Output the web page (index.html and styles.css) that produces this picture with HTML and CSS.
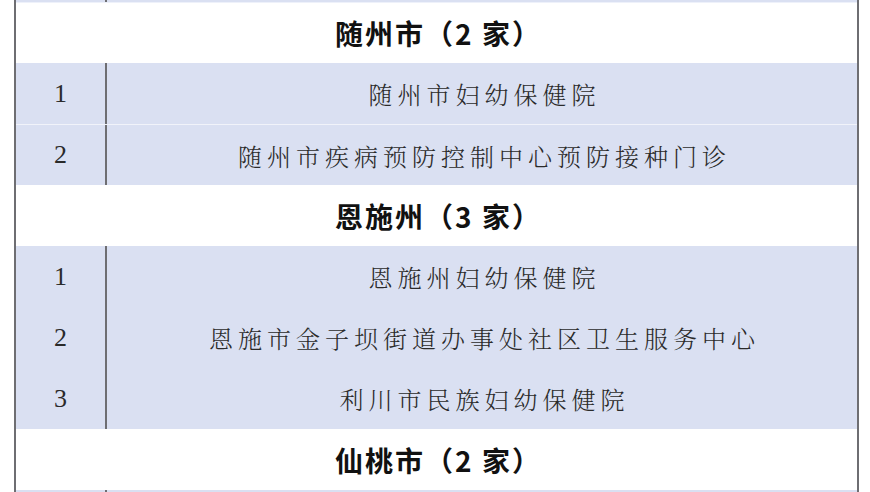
FILE: index.html
```html
<!DOCTYPE html>
<html lang="zh-CN">
<head>
<meta charset="utf-8">
<link rel="stylesheet" href="styles.css">
</head>
<body>
<div class="table">
  <div class="row data stub"><div class="num"></div><div class="name"></div></div>
  <div class="row head h1">随州市（2 家）</div>
  <div class="row data r61 sep"><div class="num">1</div><div class="name">随州市妇幼保健院</div></div>
  <div class="row data r60"><div class="num">2</div><div class="name">随州市疾病预防控制中心预防接种门诊</div></div>
  <div class="row head h2">恩施州（3 家）</div>
  <div class="row data r61"><div class="num">1</div><div class="name">恩施州妇幼保健院</div></div>
  <div class="row data r61"><div class="num">2</div><div class="name">恩施市金子坝街道办事处社区卫生服务中心</div></div>
  <div class="row data r61"><div class="num">3</div><div class="name">利川市民族妇幼保健院</div></div>
  <div class="row head h2">仙桃市（2 家）</div>
  <div class="row data tail"><div class="num"></div><div class="name"></div></div>
</div>
</body>
</html>
```
FILE: styles.css
```css
html, body {
  margin: 0;
  padding: 0;
  background: #ffffff;
}
body {
  width: 870px;
  height: 492px;
  overflow: hidden;
}
.table {
  margin-left: 14px;
  width: 841px;
  border-left: 2px solid #6e6e72;
  border-right: 2px solid #6e6e72;
  display: flex;
  flex-direction: column;
}
.row {
  display: grid;
  grid-template-columns: 91px 1fr;
}
.data {
  background: #dae0f2;
}
.stub { height: 2px; border-bottom: 1px solid #eef1fa; }
.tail { height: 2px; }
.r61 { height: 61px; }
.r60 { height: 60px; }
.sep { border-bottom: 1px solid #f1f3fa; }
.num {
  display: flex;
  align-items: center;
  justify-content: center;
  font-family: "Liberation Serif", serif;
  font-size: 26px;
  color: #2a2a2a;
  border-right: 2px solid #6e6e72;
}
.name {
  display: flex;
  align-items: center;
  justify-content: center;
  font-family: "Noto Serif CJK SC", "Noto Sans CJK SC", serif;
  font-weight: 300;
  font-size: 24px;
  letter-spacing: 5px;
  padding-left: 5px;
  color: #2a2a2a;
}
.head {
  display: flex;
  align-items: center;
  justify-content: center;
  background: #ffffff;
  font-family: "Noto Sans CJK SC", sans-serif;
  font-weight: 700;
  font-size: 28px;
  color: #111111;
  letter-spacing: 2px;
  padding-left: 4px;
}
.h1 { height: 60px; }
.h2 { height: 61px; }
```
